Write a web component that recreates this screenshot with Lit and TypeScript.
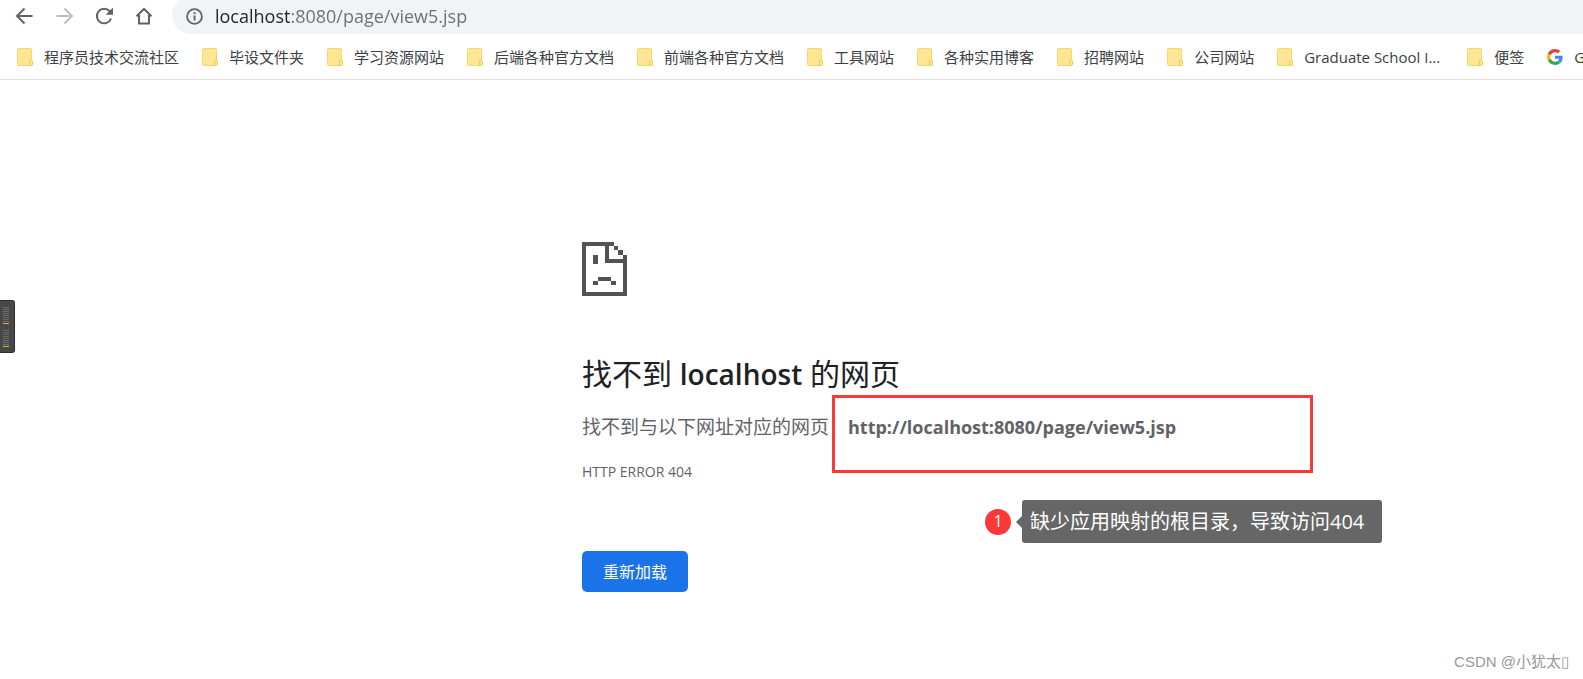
import { LitElement, html, css, svg } from "lit";
import { customElement, property } from "lit/decorators.js";

const folderIcon = svg`
  <svg class="icon" viewBox="0 0 16 18" width="16" height="18" aria-hidden="true">
    <rect x="0.5" y="0.5" width="14" height="17" rx="1" fill="#ffe694" stroke="#f5d867"/>
    <path d="M12.500 17.500v-4.500q0-1 1.200-1t1.800 1v3.500q0 1-1 1z" fill="#ffe694" stroke="#f0cc50"/>
  </svg>`;

const googleIcon = svg`
  <svg class="icon" viewBox="0 0 48 48" width="16" height="16" aria-hidden="true">
    <path fill="#ea4335" d="M24 9.500c3.540 0 6.710 1.220 9.210 3.600l6.850-6.850C35.900 2.380 30.470 0 24 0 14.620 0 6.510 5.380 2.560 13.220l7.980 6.190C12.430 13.720 17.740 9.500 24 9.500z"/>
    <path fill="#4285f4" d="M46.980 24.550c0-1.570-.15-3.090-.38-4.550H24v9.020h12.940c-.58 2.960-2.260 5.480-4.780 7.180l7.730 6c4.510-4.180 7.090-10.360 7.090-17.650z"/>
    <path fill="#fbbc05" d="M10.530 28.590A14.500 14.500 0 0 1 9.770 24c0-1.600.27-3.140.76-4.590l-7.980-6.190A23.900 23.900 0 0 0 0 24c0 3.880.92 7.540 2.560 10.780z"/>
    <path fill="#34a853" d="M24 48c6.480 0 11.930-2.130 15.890-5.810l-7.730-6c-2.150 1.450-4.920 2.300-8.160 2.300-6.260 0-11.570-4.220-13.470-9.910l-7.980 6.190C6.510 42.620 14.620 48 24 48z"/>
  </svg>`;

const fonts = css`"Open Sans", "Noto Sans CJK SC", sans-serif`;

@customElement("browser-toolbar")
export class BrowserToolbar extends LitElement {
  @property() url = "";

  static styles = css`
    :host { display: block; overflow: hidden; }
    .bar { display: flex; align-items: center; height: 34px; padding-left: 12px; }
    .nav { display: flex; gap: 16px; padding-bottom: 2px; }
    button {
      display: grid; place-items: center; width: 24px; height: 24px;
      padding: 0; border: 0; background: none; color: #5f6368;
    }
    button:disabled { color: #bcbec1; }
    .nav svg { display: block; }
    .address {
      flex: 1; display: flex; align-items: center; gap: 12px;
      box-sizing: border-box; height: 38px; margin: -4px 0 0 16px; padding: 2px 0 0 14px;
      border-radius: 19px 0 0 19px; background: #f1f3f4; color: #5f6368;
    }
    input {
      flex: 1; min-width: 0; height: 30px; padding: 0; border: 0; outline: 0;
      font: 18px/30px ${fonts};
      background: linear-gradient(to right, #202124 76px, #6b6f73 76px);
      -webkit-background-clip: text; background-clip: text;
      -webkit-text-fill-color: transparent;
    }
  `;

  render() {
    return html`
      <div class="bar">
        <nav class="nav" aria-label="导航">
          <button aria-label="后退">
            <svg width="24" height="24" viewBox="0 0 24 24" fill="none" stroke="currentColor" stroke-width="2"><path d="M20.500 12H5.500M12.500 4.500L5 12l7.500 7.500"/></svg>
          </button>
          <button aria-label="前进" disabled>
            <svg width="24" height="24" viewBox="0 0 24 24" fill="none" stroke="currentColor" stroke-width="2"><path d="M4.500 12h15M12.500 4.500L20 12l-7.500 7.500"/></svg>
          </button>
          <button aria-label="刷新">
            <svg width="24" height="24" viewBox="0 0 24 24" fill="none" stroke="currentColor" stroke-width="2"><path d="M19 14.500a7.300 7.300 0 1 1-1.300-7.300l1.300 1.500"/><path d="M21 3.500v7.300h-7.300z" fill="currentColor" stroke="none"/></svg>
          </button>
          <button aria-label="主页">
            <svg width="24" height="24" viewBox="0 0 24 24" fill="none" stroke="currentColor" stroke-width="2"><path d="M4.500 12.300L12 5l7.500 7.300M7 11v8.500h10V11"/></svg>
          </button>
        </nav>
        <label class="address">
          <svg width="17" height="17" viewBox="0 0 17 17" role="img" aria-label="网址"><circle cx="8.500" cy="8.500" r="7.400" fill="none" stroke="currentColor" stroke-width="1.800"/><path d="M7.600 7.500h1.900v5H7.600zM7.600 4.300h1.900v1.900H7.600z" fill="currentColor"/></svg>
          <input type="text" .value=${this.url} spellcheck="false" />
        </label>
      </div>
    `;
  }
}

@customElement("bookmark-bar")
export class BookmarkBar extends LitElement {
  static styles = css`
    :host { display: block; overflow: hidden; border-bottom: 1px solid #dadce0; }
    nav { display: flex; gap: 23px; height: 45px; padding-left: 17px; align-items: center; }
    a {
      flex: none; display: flex; align-items: center; gap: 11px;
      color: #3c4043; text-decoration: none; white-space: nowrap;
      font: 15px/24px ${fonts};
    }
    .icon { flex: none; display: block; }
    .truncated { min-width: 140px; }
  `;

  private folders = [
    "程序员技术交流社区", "毕设文件夹", "学习资源网站", "后端各种官方文档", "前端各种官方文档",
    "工具网站", "各种实用博客", "招聘网站", "公司网站", "Graduate School I...", "便签",
  ];

  render() {
    return html`
      <nav aria-label="书签">
        ${this.folders.map(
          (name) => html`<a href="#">${folderIcon}<span class=${name.endsWith("...") ? "truncated" : "title"}>${name}</span></a>`
        )}
        <a href="#">${googleIcon}<span>G</span></a>
      </nav>
    `;
  }
}

@customElement("level-meter")
export class LevelMeter extends LitElement {
  static styles = css`
    :host { display: block; }
    .panel {
      box-sizing: border-box; width: 15px; height: 53px; padding: 6px 0 0 3px;
      border: 1px solid #2e2e2e; border-left: 0; border-radius: 0 3px 3px 0; background: #484848;
    }
    .group { display: grid; gap: 1px; width: 6px; margin-bottom: 6px; }
    .tick { height: 1px; background: #6b6b6b; }
    .orange { background: #f5a623; }
    .green { background: #7ee820; }
  `;

  render() {
    const ticks = Array.from({ length: 8 }, () => html`<div class="tick"></div>`);
    return html`
      <div class="panel">
        <div class="group">${ticks}<div class="tick orange"></div></div>
        <div class="group">${ticks}<div class="tick green"></div></div>
      </div>
    `;
  }
}

@customElement("error-page")
export class ErrorPage extends LitElement {
  @property() url = "";

  static styles = css`
    :host {
      display: block; padding: 162px 0 0 round(down, calc(50% - 209px), 1px);
      color: #5f6368; font: 14px/24px ${fonts};
    }
    .sad { display: block; width: 45px; height: 54px; }
    h1 { margin: 56px 0 0; font-size: 30px; line-height: 44px; font-weight: 400; color: #202124; white-space: nowrap; }
    h1 span { font-size: 28px; font-weight: 600; }
    .message { position: relative; margin: 17px 0 0; font-size: 19px; line-height: 28px; white-space: nowrap; }
    strong { font-size: 18px; }
    .code { margin: 19px 0 0; }
    .reload {
      display: block; margin-top: 67px; height: 41px; padding: 0 21px;
      border: 0; border-radius: 5px; background: #1a73e8; color: #fff; font: 16px/24px ${fonts};
    }
    .frame {
      position: absolute; left: 250px; top: -18px; box-sizing: border-box;
      width: 481px; height: 78px; border: 3px solid #fd3838;
    }
    .note {
      position: absolute; left: 403px; top: 87px; display: flex; align-items: center;
      color: #fff; font-size: 20px; line-height: 43px;
    }
    .badge {
      width: 26px; height: 26px; border-radius: 50%; background: #fd3838;
      text-align: center; font-size: 16px; line-height: 24px;
    }
    .arrow { margin-left: 5px; border: 6px solid transparent; border-left: 0; border-right-color: #666; }
    .tip { padding: 0 18px 0 8px; border-radius: 3px; background: #666; }
  `;

  render() {
    return html`
      <svg class="sad" viewBox="0 0 45 54" fill="#535353" shape-rendering="crispEdges" aria-hidden="true">
        <path d="M0 0h32v4H4v46h37V21H23V4h4v13h14v-4h4v41H0z"/>
        <path d="M32 4h4v4h-4zM36 8h5v5h-5zM11 13h5v9h-5zM16 35h13v4H16zM11 39h5v4h-5zM29 39h5v4h-5z"/>
      </svg>
      <h1>找不到 <span>localhost</span> 的网页</h1>
      <div class="message">
        找不到与以下网址对应的网页：<strong>${this.url}</strong>
        <div class="frame"></div>
        <div class="note">
          <span class="badge">1</span><span class="arrow"></span><span class="tip">缺少应用映射的根目录，导致访问404</span>
        </div>
      </div>
      <div class="code">HTTP ERROR 404</div>
      <button class="reload">重新加载</button>
    `;
  }
}

@customElement("app-root")
export class AppRoot extends LitElement {
  static styles = css`
    :host { display: block; position: relative; min-height: 100vh; background: #fff; overflow: hidden; }
    level-meter { position: absolute; left: 0; top: 300px; }
    .watermark {
      position: absolute; right: 14px; bottom: 5px; color: #999;
      font: 15px/24px "Liberation Sans", "Noto Sans CJK SC", sans-serif;
    }
  `;

  render() {
    return html`
      <browser-toolbar url="localhost:8080/page/view5.jsp"></browser-toolbar>
      <bookmark-bar></bookmark-bar>
      <error-page url="http://localhost:8080/page/view5.jsp"></error-page>
      <level-meter></level-meter>
      <div class="watermark">CSDN @小犹太▯</div>
    `;
  }
}
